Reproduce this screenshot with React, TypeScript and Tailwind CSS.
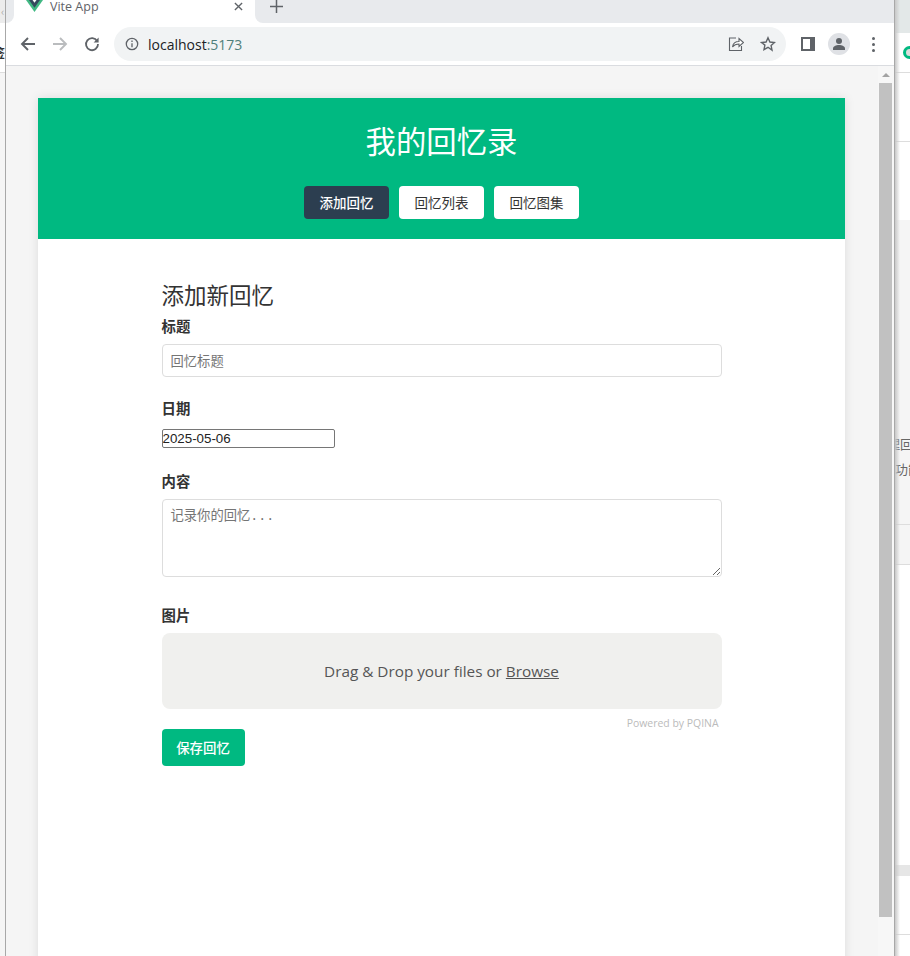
const SANS = "font-['Open_Sans','Noto_Sans_CJK_SC',sans-serif]";

const BackIcon = ({ color }: { color: string }) => (
  <svg width="16" height="16" viewBox="0 0 16 16" fill="none" stroke={color} strokeWidth="1.9">
    <path d="M15 8H2M8 2 2 8l6 6" />
  </svg>
);

const Toolbar = () => (
  <div className="box-content flex h-[42px] items-center border-b border-[#dadce0] bg-white">
    <div className="ml-[14px] flex items-center gap-[16px]">
      <BackIcon color="#5f6368" />
      <div className="scale-x-[-1]">
        <BackIcon color="#babcbe" />
      </div>
      <svg width="16" height="16" viewBox="0 0 16 16" fill="none" stroke="#5f6368" strokeWidth="1.8">
        <path d="M13.2 5.2A6 6 0 1 0 14 8" />
        <path d="M14.6 1.6v5h-5z" fill="#5f6368" stroke="none" />
      </svg>
    </div>
    <div className="ml-[14px] flex h-[34px] w-[672px] items-center rounded-full bg-[#f1f3f4] pl-[11px]">
      <svg width="14" height="14" viewBox="0 0 14 14" fill="none" stroke="#5f6368" strokeWidth="1.3">
        <circle cx="7" cy="7" r="5.7" />
        <path d="M7 6.2v4M7 3.6v1.4" />
      </svg>
      <span className={`ml-[9px] text-[14px] text-[#202124] ${SANS}`}>
        localhost<span className="text-[#4f7f7a]">:5173</span>
      </span>
      <div className="ml-auto flex items-center gap-[16px] pr-[10px]">
        <svg width="16" height="16" viewBox="0 0 16 16" fill="none" stroke="#5f6368" strokeWidth="1.1">
          <path d="M8 2H1.500v12.500h12V10" />
          <path d="M4.500 11c.5-3.500 3-5.500 6.500-5.500V2.500L15.500 6.500 11 10.500V8c-3 0-5 1-6.500 3z" fill="white" />
        </svg>
        <svg width="16" height="16" viewBox="0 0 16 16" fill="none" stroke="#5f6368" strokeWidth="1.4">
          <path d="m8 1.800 1.900 4.200 4.600.5-3.400 3.100.9 4.500L8 11.300l-4 2.300.9-4.500L1.500 6.500l4.600-.5z" />
        </svg>
      </div>
    </div>
    <div className="ml-[15px] h-[14px] w-[14px] border-y-[2px] border-l-[2px] border-r-[5px] border-[#5f6368] bg-white" />
    <div className="ml-[13px] flex h-[22px] w-[22px] items-center justify-center rounded-full bg-[#dfe1e5]">
      <svg width="14" height="14" viewBox="0 0 14 14" fill="#5f6368">
        <circle cx="7" cy="4" r="3" />
        <path d="M1 13v-1.500C1 9.500 4 8 7 8s6 1.500 6 3.500V13z" />
      </svg>
    </div>
    <div className="ml-[22px] flex flex-col gap-[3px]">
      <span className="h-[3px] w-[3px] rounded-full bg-[#5f6368]" />
      <span className="h-[3px] w-[3px] rounded-full bg-[#5f6368]" />
      <span className="h-[3px] w-[3px] rounded-full bg-[#5f6368]" />
    </div>
  </div>
);

const TabStrip = () => (
  <div className="flex h-[23px] items-stretch bg-white">
    <div className="w-[8px] rounded-br-[8px] bg-[#e8eaed]" />
    <div className="flex w-[241px] items-start">
      <svg className="ml-[12px]" width="17" height="12" viewBox="0 0 17 12">
        <path d="M0 0h17L8.500 12z" fill="#41b883" />
        <path d="M3 0h11L8.500 7.800z" fill="#35495e" />
        <path d="M6.500 0h4L8.500 2.800z" fill="white" />
      </svg>
      <span className={`ml-[7px] text-[12.500px] leading-[13px] text-[#5f6368] ${SANS}`}>Vite App</span>
      <svg className="ml-auto mr-[12px] mt-[2px] text-[#5f6368]" width="9" height="9" viewBox="0 0 10 10" stroke="currentColor" strokeWidth="1.500">
        <path d="m1 1 8 8M9 1 1 9" />
      </svg>
    </div>
    <div className="flex flex-1 items-start rounded-bl-[8px] bg-[#e8eaed] pl-[15px]">
      <svg width="13" height="13" viewBox="0 0 13 13" stroke="#5f6368" strokeWidth="1.500">
        <path d="M6.500 0v13M0 6.500h13" />
      </svg>
    </div>
  </div>
);

const Label = ({ text }: { text: string }) => (
  <label className="mb-[8px] block text-[14.400px] font-bold leading-[21px] text-[#333]">{text}</label>
);

const MemoryForm = () => (
  <div className="mx-auto w-[560px] pt-[38px]">
    <h2 className="mb-[4px] text-[22.500px] leading-[34px] text-[#333]">添加新回忆</h2>
    <div className="mb-[20px]">
      <Label text="标题" />
      <input
        placeholder="回忆标题"
        className="block h-[33px] w-full rounded-[4px] border border-[#ddd] px-[8px] text-[13.300px] placeholder:text-[#757575]"
      />
    </div>
    <div className="mb-[22px]">
      <Label text="日期" />
      <input
        readOnly
        value="2025-05-06"
        className="mt-[11px] block h-[19px] w-[173px] rounded-[2px] border border-[#767676] font-['Liberation_Sans',sans-serif] text-[13.330px] text-[#222]"
      />
    </div>
    <div className="mb-[27px]">
      <Label text="内容" />
      <textarea
        placeholder="记录你的回忆..."
        className="block h-[78px] w-full rounded-[4px] border border-[#ddd] px-[8px] pb-[4px] pt-[7px] font-['Liberation_Mono','Noto_Sans_CJK_SC',monospace] text-[13.300px] placeholder:text-[#757575]"
      />
    </div>
    <div>
      <Label text="图片" />
      <div className="flex h-[76px] items-center justify-center rounded-[8px] bg-[#f0f0ee] font-['Open_Sans',sans-serif] text-[15.300px] text-[#555]">
        <span>
          Drag &amp; Drop your files or <span className="underline">Browse</span>
        </span>
      </div>
      <p className="mt-[8px] pr-[3px] text-right font-['Open_Sans',sans-serif] text-[10.450px] leading-[12px] text-[#bbb]">
        Powered by PQINA
      </p>
    </div>
    <button className="h-[37px] w-[83px] rounded-[4px] bg-[#00b981] text-[13.400px] font-medium text-white">
      保存回忆
    </button>
  </div>
);

const Page = () => (
  <div className="flex min-h-0 flex-1 bg-[#f5f5f5] font-['Noto_Sans_CJK_SC',sans-serif]">
    <div className="min-w-0 flex-1 overflow-hidden pl-[32px] pt-[32px]">
      <div className="h-[900px] w-[807px] bg-white shadow-[0_0_10px_rgba(0,0,0,0.1)]">
        <header className="flex h-[141px] flex-col items-center bg-[#00b981] pt-[21px]">
          <h1 className="text-[30.400px] font-normal leading-[42px] text-white">我的回忆录</h1>
          <nav className="mt-[25px] flex gap-[10px]">
            <button className="h-[33px] w-[85px] rounded-[4px] bg-[#2c3e50] text-[13.500px] font-medium text-white">添加回忆</button>
            <button className="h-[33px] w-[85px] rounded-[4px] bg-white text-[13.500px] text-[#333]">回忆列表</button>
            <button className="h-[33px] w-[85px] rounded-[4px] bg-white text-[13.500px] text-[#333]">回忆图集</button>
          </nav>
        </header>
        <MemoryForm />
      </div>
    </div>
    <div className="flex w-[16px] flex-col bg-[#f7f7f7] px-[1px]">
      <div className="flex h-[17px] items-center justify-center">
        <span className="h-0 w-0 border-x-[4px] border-b-[4px] border-x-transparent border-b-[#a3a3a3]" />
      </div>
      <div className="h-[834px] w-[13px] bg-[#c1c1c1]" />
    </div>
  </div>
);

// windows behind the browser, only a sliver of them shows on each side
const LeftEdge = () => (
  <div className="flex w-[5px] flex-col overflow-hidden bg-[#f5f5f5] font-['Noto_Sans_CJK_SC',sans-serif]">
    <div className="flex h-[23px] items-center bg-[#ececec] pl-[1px] text-[11px] leading-none text-[#aaa]">‹</div>
    <div className="h-[50px] whitespace-nowrap border-b border-[#ddd] bg-white pt-[21px] text-[12px] font-bold leading-[18px] text-[#333]">
      <span className="-ml-[7px] inline-block">签</span>
    </div>
  </div>
);

const RightEdge = () => (
  <div className="relative flex w-[15px] flex-col overflow-hidden bg-[#f5f5f5] font-['Noto_Sans_CJK_SC',sans-serif] text-[13px] leading-[25px] text-[#666]">
    <div className="h-[33px] shrink-0 bg-[#e3e8e8]" />
    <div className="flex h-[40px] shrink-0 items-center border-b border-[#ddd] bg-white pl-[8px]">
      <span className="h-[13px] w-[13px] shrink-0 rounded-full border-[3px] border-[#00b981] bg-[#ddd]" />
    </div>
    <div className="h-[69px] shrink-0 border-b border-[#ddd] bg-white" />
    <div className="h-[78px] shrink-0 bg-white" />
    <div className="h-[305px] shrink-0 border-b border-[#ddd]" />
    <div className="h-[40px] shrink-0 border-b border-[#ddd]" />
    <div className="h-[300px] shrink-0 bg-white" />
    <div className="h-[11px] shrink-0 bg-[#e6e6e6]" />
    <div className="h-[59px] shrink-0 border-b border-[#ddd] bg-white" />
    <div className="h-[21px] shrink-0 bg-white" />
    <div className="absolute left-0 top-[431px] whitespace-nowrap">
      <p className="-ml-[8px]">理回忆</p>
      <p>功能</p>
    </div>
    <div className="absolute inset-y-0 left-0 w-[5px] bg-gradient-to-r from-[#c8c8c8] to-transparent" />
  </div>
);

export default function App() {
  return (
    <div className="flex h-[956px] w-[910px] overflow-hidden bg-white">
      <LeftEdge />
      <div className="flex w-[890px] flex-col border-x border-[#a8a8a8]">
        <TabStrip />
        <Toolbar />
        <Page />
      </div>
      <RightEdge />
    </div>
  );
}
